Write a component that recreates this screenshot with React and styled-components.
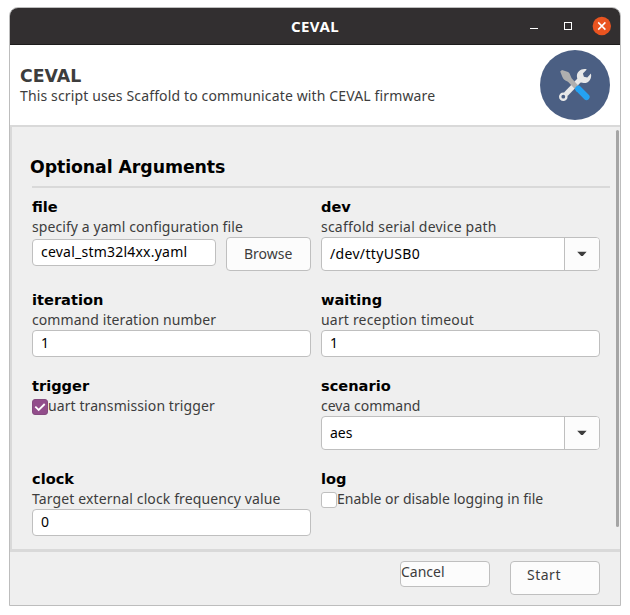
import React from "react";
import styled, { createGlobalStyle } from "styled-components";

const GlobalStyle = createGlobalStyle`
  * { box-sizing: border-box; }
  body {
    margin: 0;
    background: #fff;
    font: 14px/20px "Noto Sans", "Open Sans", sans-serif;
    color: #3d3d3d;
  }
`;

const Window = styled.main`
  width: 612px;
  height: 599px;
  margin: 7px 0 0 9px;
  display: flex;
  flex-direction: column;
  border: 1px solid #bdbdbd;
  border-radius: 9px 9px 0 0;
  background: #efefef;
  overflow: hidden;
`;

const TitleBar = styled.header`
  flex: none;
  height: 37px;
  display: grid;
  grid-template-columns: 1fr auto 1fr;
  align-items: center;
  padding-right: 9px;
  padding-left: 9px;
  background: #322f30;
  border-bottom: 1px solid #1d1c1c;
`;

const WindowTitle = styled.span`
  grid-column: 2;
  font-size: 15px;
  font-weight: 700;
  letter-spacing: 0.4px;
  color: #fff;
`;

const Controls = styled.svg`
  justify-self: end;
  display: block;
`;

const Banner = styled.section`
  flex: none;
  height: 82px;
  display: flex;
  justify-content: space-between;
  padding: 5px 10px 0;
  background: #fff;
  border-bottom: 2px solid #d9d9d9;
`;

const BannerText = styled.div`
  padding-top: 16px;
`;

const BannerTitle = styled.h1`
  margin: 0;
  font: 700 17.33px/20px "DejaVu Sans", sans-serif;
`;

const Text = styled.p`
  margin: 0;
  white-space: nowrap;
  line-height: 20px;
  letter-spacing: ${(p) => p.$spacing || 0}px;
`;

const Body = styled.section`
  flex: none;
  height: 425px;
  display: flex;
  justify-content: space-between;
  border-left: 2px solid #d9d9d9;
  border-bottom: 3px solid #d9d9d9;
`;

const Form = styled.div`
  width: 598px;
  padding: 30px 0 0 18px;
`;

const SectionTitle = styled.h2`
  margin: 0 0 9px;
  font: 700 17.33px/20px "DejaVu Sans", sans-serif;
  letter-spacing: -0.08px;
  color: #000;
`;

const Rule = styled.hr`
  margin: 0 0 9px 2px;
  border: 0;
  height: 2px;
  background: #d9d9d9;
`;

const Fields = styled.div`
  display: grid;
  grid-template-columns: 279px 279px;
  column-gap: 10px;
  row-gap: 19px;
  padding-left: 2px;
`;

const Label = styled.h3`
  margin: 0;
  font: 700 14.6px/20px "DejaVu Sans", sans-serif;
  color: #000;
`;

const Inline = styled.div`
  display: flex;
  align-items: flex-start;
  gap: ${(p) => p.$gap || 0}px;
`;

const Input = styled.div`
  flex: 1;
  height: 27px;
  margin-top: ${(p) => p.$top || 0}px;
  padding: 0 8px;
  border: 1px solid #bfbfbf;
  border-radius: 4px;
  background: #fff;
  color: #000;
  line-height: 23px;
  letter-spacing: ${(p) => p.$spacing || 0}px;
`;

const Button = styled.button`
  width: ${(p) => p.$width}px;
  height: ${(p) => p.$height}px;
  padding: ${(p) => p.$padding};
  border: 1px solid #bfbfbf;
  border-radius: 4px;
  background: #fcfcfc;
  color: #3d3d3d;
  font: inherit;
  text-align: left;
  line-height: 20px;
  letter-spacing: ${(p) => p.$spacing || 0}px;
`;

const SelectBox = styled.div`
  height: 34px;
  display: grid;
  grid-template-columns: 1fr 35px;
  border: 1px solid #bfbfbf;
  border-radius: 4px;
  background: #fff;
  overflow: hidden;
`;

const SelectValue = styled.span`
  padding-left: 8px;
  line-height: 32px;
  color: #000;
  letter-spacing: ${(p) => p.$spacing || 0}px;
`;

const SelectArrow = styled.span`
  display: grid;
  place-items: center;
  border-left: 1px solid #bfbfbf;
  background: #fcfcfc;
`;

const CheckBox = styled.span`
  width: 16px;
  height: 16px;
  margin-top: 3px;
  border: 1px solid ${(p) => (p.$checked ? "#854a7f" : "#bfbfbf")};
  border-radius: 3px;
  background: ${(p) => (p.$checked ? "#924d8b" : "#fff")};
`;

const ScrollThumb = styled.div`
  width: 3px;
  height: 397px;
  margin: 3px 1px 0 0;
  border-radius: 2px;
  background: #a5a5a5;
`;

const Footer = styled.footer`
  flex: 1;
  display: flex;
  align-items: flex-start;
  justify-content: flex-end;
  gap: 20px;
  padding: 9px 20px 0;
`;

function WindowControls() {
  return (
    <Controls width="82" height="20" viewBox="0 0 82 20" fill="none">
      <path d="M1 12.5h8" stroke="#fff" />
      <rect x="35.5" y="6.5" width="7" height="7" stroke="#fff" />
      <circle cx="72.8" cy="10" r="9.2" fill="#e95420" />
      <path d="m69.2 6.4 7.2 7.2m0-7.2-7.2 7.2" stroke="#fff" strokeWidth="1.5" />
    </Controls>
  );
}

function ToolsLogo() {
  return (
    <svg width="70" height="70" viewBox="0 0 70 70">
      <circle cx="35" cy="35" r="35" fill="#4b5f83" />
      <path d="M25.8 44.2 39.5 30" stroke="#e8e8e8" strokeWidth="5" />
      <path
        d="M46.8 19.4c-4.9-1.6-10.2 2-9.9 7.2.2 3.8 3.2 6.4 6.8 6.5 4.9.2 8.6-4.6 7.2-9.7l-3.6 4.1-3.4-.7-1-3.3z"
        fill="#e8e8e8"
      />
      <circle cx="23.3" cy="46.7" r="3.1" fill="none" stroke="#e8e8e8" strokeWidth="2.4" />
      <path
        d="M20.2 21.6 22 20.1l5.3 1.6c1.8.5 2.4 1.6 3 3.6l1.3 3 6.7 7.3-3.5 3.3-6.8-7.2-2.6-1.2c-1.5-.8-2.4-1.8-3-3.4z"
        fill="#afafaf"
      />
      <path d="m38.5 38.8 8 8.2" stroke="#24a2f2" strokeWidth="6.2" strokeLinecap="round" />
      <path d="m34.7 38.6 3.5-3.2 3 2-4.8 4.4z" fill="#24a2f2" />
    </svg>
  );
}

function Field({ name, help, spacing, children }) {
  return (
    <div>
      <Label>{name}</Label>
      <Text $spacing={spacing}>{help}</Text>
      {children}
    </div>
  );
}

function CheckField({ name, help, spacing, checked }) {
  return (
    <div>
      <Label>{name}</Label>
      <Inline>
        <CheckBox $checked={checked}>
          {checked && (
            <svg width="14" height="14" viewBox="0 0 14 14" fill="none" display="block">
              <path d="m2.3 6.6 3.4 3.4 6-6" stroke="#fff" strokeWidth="1.8" />
            </svg>
          )}
        </CheckBox>
        <Text $spacing={spacing}>{help}</Text>
      </Inline>
    </div>
  );
}

function Select({ value, spacing }) {
  return (
    <SelectBox>
      <SelectValue $spacing={spacing}>{value}</SelectValue>
      <SelectArrow>
        <svg width="10" height="6" viewBox="0 0 10 6">
          <path d="M.2.8h9.4L5.8 5H4.2z" fill="#3d3d3d" />
        </svg>
      </SelectArrow>
    </SelectBox>
  );
}

export default function App() {
  return (
    <>
      <GlobalStyle />
      <Window>
        <TitleBar>
          <WindowTitle>CEVAL</WindowTitle>
          <WindowControls />
        </TitleBar>
        <Banner>
          <BannerText>
            <BannerTitle>CEVAL</BannerTitle>
            <Text $spacing={0.14}>This script uses Scaffold to communicate with CEVAL firmware</Text>
          </BannerText>
          <ToolsLogo />
        </Banner>
        <Body>
          <Form>
            <SectionTitle>Optional Arguments</SectionTitle>
            <Rule />
            <Fields>
              <Field name="file" help="specify a yaml configuration file" spacing={0.08}>
                <Inline $gap={10}>
                  <Input $top={2} $spacing={0.22}>ceval_stm32l4xx.yaml</Input>
                  <Button $width={85} $height={34} $padding="0 0 0 17px">Browse</Button>
                </Inline>
              </Field>
              <Field name="dev" help="scaffold serial device path" spacing={0.22}>
                <Select value="/dev/ttyUSB0" spacing={0.33} />
              </Field>
              <Field name="iteration" help="command iteration number" spacing={0.08}>
                <Input>1</Input>
              </Field>
              <Field name="waiting" help="uart reception timeout" spacing={0.19}>
                <Input>1</Input>
              </Field>
              <CheckField name="trigger" help="uart transmission trigger" spacing={0.09} checked />
              <Field name="scenario" help="ceva command">
                <Select value="aes" />
              </Field>
              <Field name="clock" help="Target external clock frequency value" spacing={0.12}>
                <Input>0</Input>
              </Field>
              <CheckField name="log" help="Enable or disable logging in file" />
            </Fields>
          </Form>
          <ScrollThumb />
        </Body>
        <Footer>
          <Button $width={90} $height={26} $padding="0 0 7px 0">Cancel</Button>
          <Button $width={90} $height={34} $padding="0 0 7px 16px" $spacing={0.5}>Start</Button>
        </Footer>
      </Window>
    </>
  );
}
